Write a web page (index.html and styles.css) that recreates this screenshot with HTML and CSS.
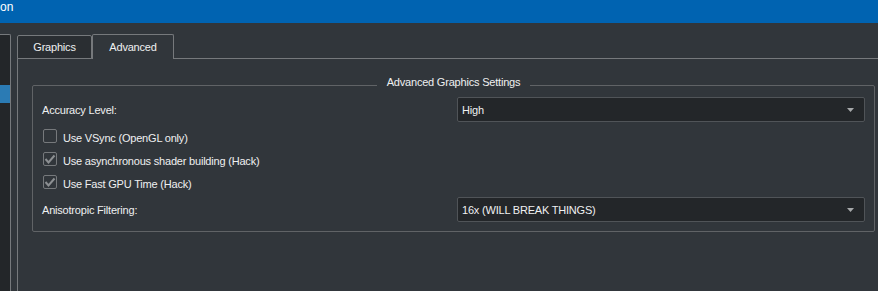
FILE: index.html
```html
<!DOCTYPE html>
<html lang="en">
<head>
<meta charset="utf-8">
<title>Configuration</title>
<link rel="stylesheet" href="styles.css">
</head>
<body>
<div class="titlebar"><span class="title">on</span></div>
<div class="main">
  <div class="sidebar"><div class="side-item"></div></div>
  <div class="tabwidget">
    <div class="tabbar">
      <div class="tab">Graphics</div>
      <div class="tab active">Advanced</div>
    </div>
    <div class="pane">
      <fieldset class="group">
        <legend>Advanced Graphics Settings</legend>
        <div class="form">
          <div class="label">Accuracy Level:</div>
          <div class="combo"><span class="value">High</span><svg class="arrow" width="7" height="4" viewBox="0 0 7 4"><polygon points="0,0 7,0 3.5,4"/></svg></div>
          <div class="checks">
            <div class="check"><span class="box"></span><span class="text">Use VSync (OpenGL only)</span></div>
            <div class="check"><span class="box"><svg class="tick" width="12" height="12" viewBox="0 0 12 12"><path d="M1.5 6 L4.5 9.5 L10.5 2.5"/></svg></span><span class="text">Use asynchronous shader building (Hack)</span></div>
            <div class="check"><span class="box"><svg class="tick" width="12" height="12" viewBox="0 0 12 12"><path d="M1.5 6 L4.5 9.5 L10.5 2.5"/></svg></span><span class="text">Use Fast GPU Time (Hack)</span></div>
          </div>
          <div class="label">Anisotropic Filtering:</div>
          <div class="combo"><span class="value">16x (WILL BREAK THINGS)</span><svg class="arrow" width="7" height="4" viewBox="0 0 7 4"><polygon points="0,0 7,0 3.5,4"/></svg></div>
        </div>
      </fieldset>
    </div>
  </div>
</div>
</body>
</html>
```

FILE: styles.css
```css
* { box-sizing: border-box; }

html, body {
  margin: 0;
  height: 291px;
  overflow: hidden;
}

body {
  background: #31363b;
  color: #eff0f1;
  font-family: "Liberation Sans", Arial, sans-serif;
  font-size: 11px;
  letter-spacing: -0.2px;
}

.titlebar {
  height: 23px;
  background: #0063b1;
  color: #ffffff;
  font-size: 12px;
  line-height: 14px;
  letter-spacing: 0;
}

.main {
  display: flex;
  height: 268px;
}

.sidebar {
  flex: none;
  width: 11px;
  margin-top: 11px;
  background: #232629;
  border-top: 1px solid #76797c;
  border-right: 1px solid #76797c;
  border-top-right-radius: 2px;
}

.side-item {
  margin-top: 50px;
  height: 18px;
  background: #2b7bb4;
}

.tabwidget {
  flex: 1;
  min-width: 0;
  margin: 11px 0 0 6px;
  display: flex;
  flex-direction: column;
}

.tabbar {
  display: flex;
  align-items: flex-end;
  height: 25px;
  position: relative;
  z-index: 1;
}

.tab {
  text-align: center;
  line-height: 13px;
  border: 1px solid #76797c;
  border-radius: 2px 2px 0 0;
}

.tab:first-child {
  width: 75px;
  height: 24px;
  padding-top: 5px;
  background: #2a2e32;
}

.tab.active {
  width: 82px;
  height: 25px;
  padding-top: 6px;
  background: #31363b;
  border-bottom: none;
}

.pane {
  flex: 1;
  margin-top: -1px;
  border-top: 1px solid #76797c;
  border-left: 1px solid #76797c;
  background: #31363b;
  padding-left: 14px;
}

.group {
  margin: 17px 0 0 0;
  padding: 2px 9px 9px;
  width: 843px;
  min-width: 0;
  border: 1px solid #606366;
  border-radius: 2px;
}

.group legend {
  margin: 0 auto;
  padding: 0 10px 6px;
  line-height: 13px;
}

.form {
  display: grid;
  grid-template-columns: 1fr 1fr;
  column-gap: 7px;
}

.label {
  height: 25px;
  padding-top: 1px;
  line-height: 24px;
}

.combo {
  height: 25px;
  display: flex;
  align-items: center;
  justify-content: space-between;
  padding: 0 10px 0 4px;
  background: #232629;
  border: 1px solid #505458;
  border-radius: 2px;
}

.combo .value {
  line-height: 13px;
  padding-top: 1px;
}

.arrow {
  display: block;
  fill: #a7a9ab;
}

.checks {
  grid-column: 1 / -1;
  padding: 2px 0 4px;
}

.check {
  display: flex;
  align-items: flex-start;
  height: 23px;
}

.box {
  flex: none;
  width: 14px;
  height: 14px;
  margin: 5px 0 0 1px;
  border: 1px solid #76797c;
  border-radius: 2px;
}

.tick {
  display: block;
  fill: none;
  stroke: #8c8f92;
  stroke-width: 2;
}

.text {
  margin: 7px 0 0 6px;
  line-height: 14px;
}
```
